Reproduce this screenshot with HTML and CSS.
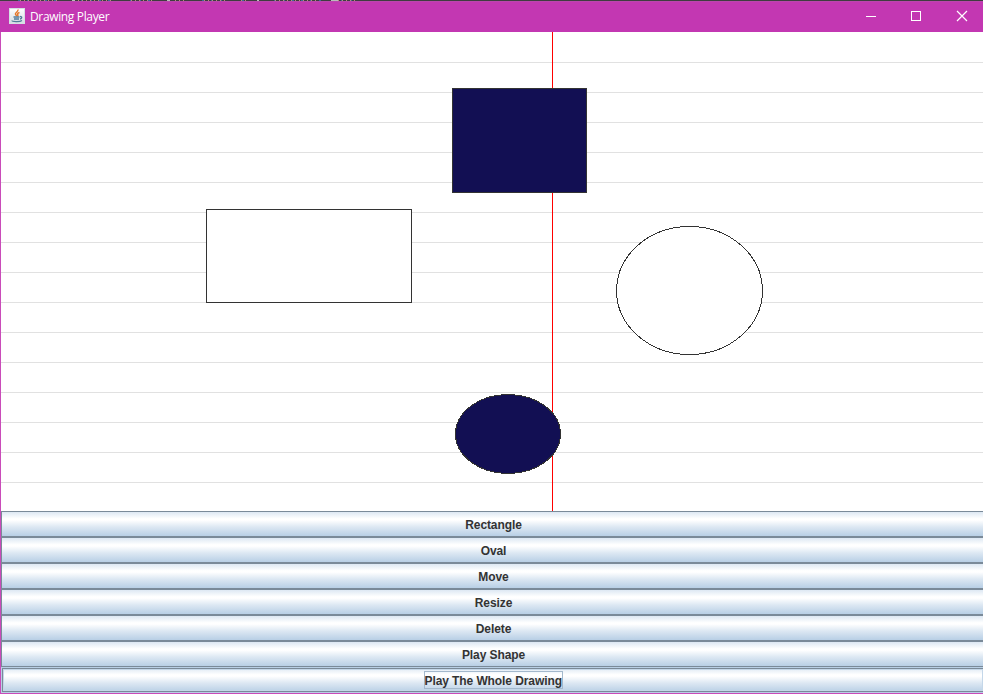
FILE: index.html
```html
<!DOCTYPE html>
<html lang="en">
<head>
<meta charset="utf-8">
<title>Drawing Player</title>
<link rel="stylesheet" href="styles.css">
</head>
<body>
<div class="window">
  <div class="edge">
    <svg width="983" height="1" shape-rendering="crispEdges">
      <path d="M18 .5H62M72 .5H112M130 .5H154M202 .5H226M242 .5H248M274 .5H322M332 .5H356" stroke="#3d6796" stroke-dasharray="2 7"/>
      <path d="M20 .5H60M74 .5H112M131 .5H154M175 .5H186M204 .5H225M241 .5H248M275 .5H317M334 .5H355" stroke="#b78b79" stroke-dasharray="1 3"/>
      <path d="M72 .5H75M167 .5H170M257 .5H259M331 .5H338" stroke="#bbb"/>
    </svg>
  </div>
  <header class="titlebar">
    <svg class="java" width="16" height="16" viewBox="0 0 16 16">
      <defs><linearGradient id="tile" x1="0" y1="0" x2="0" y2="1"><stop stop-color="#fff"/><stop offset="1" stop-color="#d3dce2"/></linearGradient></defs>
      <rect x=".5" y=".5" width="15" height="15" fill="url(#tile)" stroke="#d5dfe4"/>
      <path d="M9 1.500C9.500 4 5.500 4.500 6.500 6.500L8 8M10.500 4.500C8 5.500 8 6 9 7L8.500 8.500" fill="none" stroke="#e5782c" stroke-width="1.400"/>
      <path d="M4.500 9H10.500M5 11H10M11 8.500C13.500 8.500 13 10.500 11 11M3 12.500C3 13.800 11 14 13 12.500" fill="none" stroke="#517b9a" stroke-width="1.300"/>
    </svg>
    <span class="title">Drawing Player</span>
    <div class="controls">
      <svg width="46" height="30" viewBox="848 1 46 30"><path d="M866 16.500H876" stroke="#fff"/></svg>
      <svg width="46" height="30" viewBox="893 1 46 30"><rect x="911.500" y="11.500" width="9" height="9" fill="none" stroke="#fff"/></svg>
      <svg width="45" height="30" viewBox="939 1 45 30"><path d="M957 11L967 21M967 11L957 21" stroke="#fff" stroke-width="1.200"/></svg>
    </div>
  </header>
  <main class="content">
    <svg class="canvas" width="982" height="479" viewBox="1 32 982 479" shape-rendering="crispEdges">
      <path class="rule" d="M1 62.500H983M1 92.500H983M1 122.500H983M1 152.500H983M1 182.500H983M1 212.500H983M1 242.500H983M1 272.500H983M1 302.500H983M1 332.500H983M1 362.500H983M1 392.500H983M1 422.500H983M1 452.500H983M1 482.500H983"/>
      <path class="playhead" d="M552.500 32V511"/>
      <rect class="shape" x="206.500" y="209.500" width="205" height="93"/>
      <rect class="shape filled" x="452.500" y="88.500" width="134" height="104"/>
      <ellipse class="shape" cx="689.500" cy="290.500" rx="73" ry="64"/>
      <ellipse class="shape filled" cx="508" cy="434" rx="52.500" ry="39.500"/>
    </svg>
    <div class="buttons">
      <button>Rectangle</button>
      <button>Oval</button>
      <button>Move</button>
      <button>Resize</button>
      <button>Delete</button>
      <button>Play Shape</button>
      <button class="focused"><span>Play The Whole Drawing</span></button>
    </div>
  </main>
</div>
</body>
</html>
```
FILE: styles.css
```css
body { margin: 0; }
.window {
  width: 983px;
  height: 694px;
  overflow: hidden;
  background: #c94bb9;
}
.edge { height: 1px; background: #403c40; }
.edge svg { display: block; }
.titlebar {
  box-sizing: border-box;
  height: 31px;
  padding-left: 9px;
  display: flex;
  border-top: 1px solid #bc46ae;
  background: #c337b2;
  color: #fff;
  font: 12px/30px "Open Sans", sans-serif;
}
.java { margin-top: 6px; }
.title { margin-left: 5px; letter-spacing: -0.35px; }
.controls { display: flex; margin-left: auto; margin-top: -1px; }
.controls svg { display: block; margin-right: -0.5px; }
.content { margin-left: 1px; }
.canvas { display: block; background: #fff; }
.rule { stroke: #e1e1e1; }
.playhead { stroke: #f00; }
.shape { fill: #fff; stroke: #333; }
.filled { fill: #120f53; }
.buttons { display: flex; flex-direction: column; width: 984px; }
button {
  box-sizing: border-box;
  height: 26px;
  padding: 2px 0 0 1px;
  display: flex;
  justify-content: center;
  border: 1px solid #7a8a99;
  border-radius: 0;
  background: linear-gradient(#dde8f3 0, #fff 28%, #fff 34%, #dde8f3 62%, #b8cfe5 100%);
  color: #333;
  font: bold 12px/22px "Liberation Sans", sans-serif;
  letter-spacing: -0.09px;
}
.focused {
  padding: 3px 0 0;
  border-color: #b8cfe5;
  box-shadow: inset 0 0 0 1px #7a8a99, inset 0 0 0 2px #c4d7e9;
}
.focused span {
  box-sizing: border-box;
  width: 139px;
  height: 18px;
  padding-top: 1px;
  line-height: 16px;
  white-space: nowrap;
  border: 1px solid #a3b8cc;
}
```
